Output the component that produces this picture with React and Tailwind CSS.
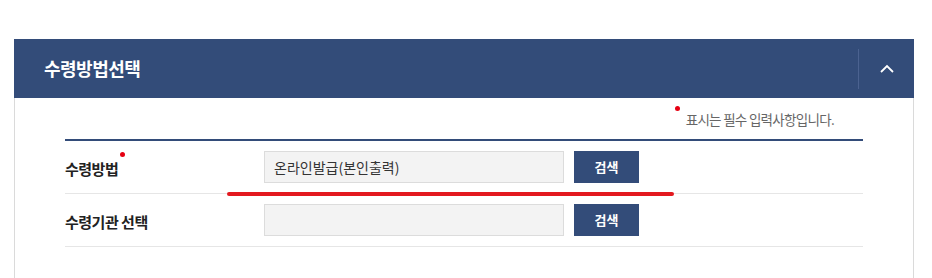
import React from "react";

const FONT = { fontFamily: '"Noto Sans CJK KR", "Noto Sans", sans-serif' };

function Row({ label, required, value, marked }) {
  return (
    <div className="relative flex items-center h-[53px] border-b border-[#e6e6e6]">
      <div className="w-[199px] shrink-0 pt-[3px]">
        <span className="relative inline-block text-[15px] font-bold text-[#222] tracking-[-0.5px]">
          {label}
          {required && (
            <span className="absolute right-[-7px] top-[-6px] w-[5px] h-[5px] rounded-full bg-[#e60012]" />
          )}
        </span>
      </div>
      <div className="w-[300px] h-[32px] bg-[#f3f3f3] border border-[#dcdcdc] flex items-center px-[9px] text-[14px] text-[#333]">
        {value}
      </div>
      <button className="ml-[10px] w-[65px] h-[32px] bg-[#334c79] text-white text-[13px] font-bold">검색</button>
      {marked && (
        <span className="absolute left-[162px] bottom-[-3px] w-[447px] h-[4px] rounded-full bg-[#e3191f]" />
      )}
    </div>
  );
}

export default function App() {
  return (
    <div className="w-[932px] h-[278px] bg-white overflow-hidden pt-[39px] px-[14px]" style={FONT}>
      <div className="w-[900px]">
        {/* header */}
        <div className="h-[59px] bg-[#334c79] flex items-center">
          <h2 className="flex-1 pl-[30px] text-white text-[18px] font-bold tracking-[-0.5px]">수령방법선택</h2>
          <div className="w-[56px] h-[40px] border-l border-[#4b6290] flex items-center justify-center">
            <svg width="14" height="9" viewBox="0 0 14 9" fill="none">
              <path d="M1 8 L7 2 L13 8" stroke="white" strokeWidth="1.8" />
            </svg>
          </div>
        </div>
        {/* body */}
        <div className="h-[200px] border-x border-[#dadada] px-[50px]">
          <div className="h-[41px] flex items-center justify-end pr-[29px]">
            <span className="relative text-[13.5px] text-[#666] tracking-[-0.7px] pt-[2px]">
              <span className="absolute left-[-11px] top-[-1px] w-[5px] h-[5px] rounded-full bg-[#e60012]" />
              표시는 필수 입력사항입니다.
            </span>
          </div>
          <div className="border-t-2 border-[#334c79]">
            <Row label="수령방법" required value="온라인발급(본인출력)" marked />
            <Row label="수령기관 선택" value="" />
          </div>
        </div>
      </div>
    </div>
  );
}
